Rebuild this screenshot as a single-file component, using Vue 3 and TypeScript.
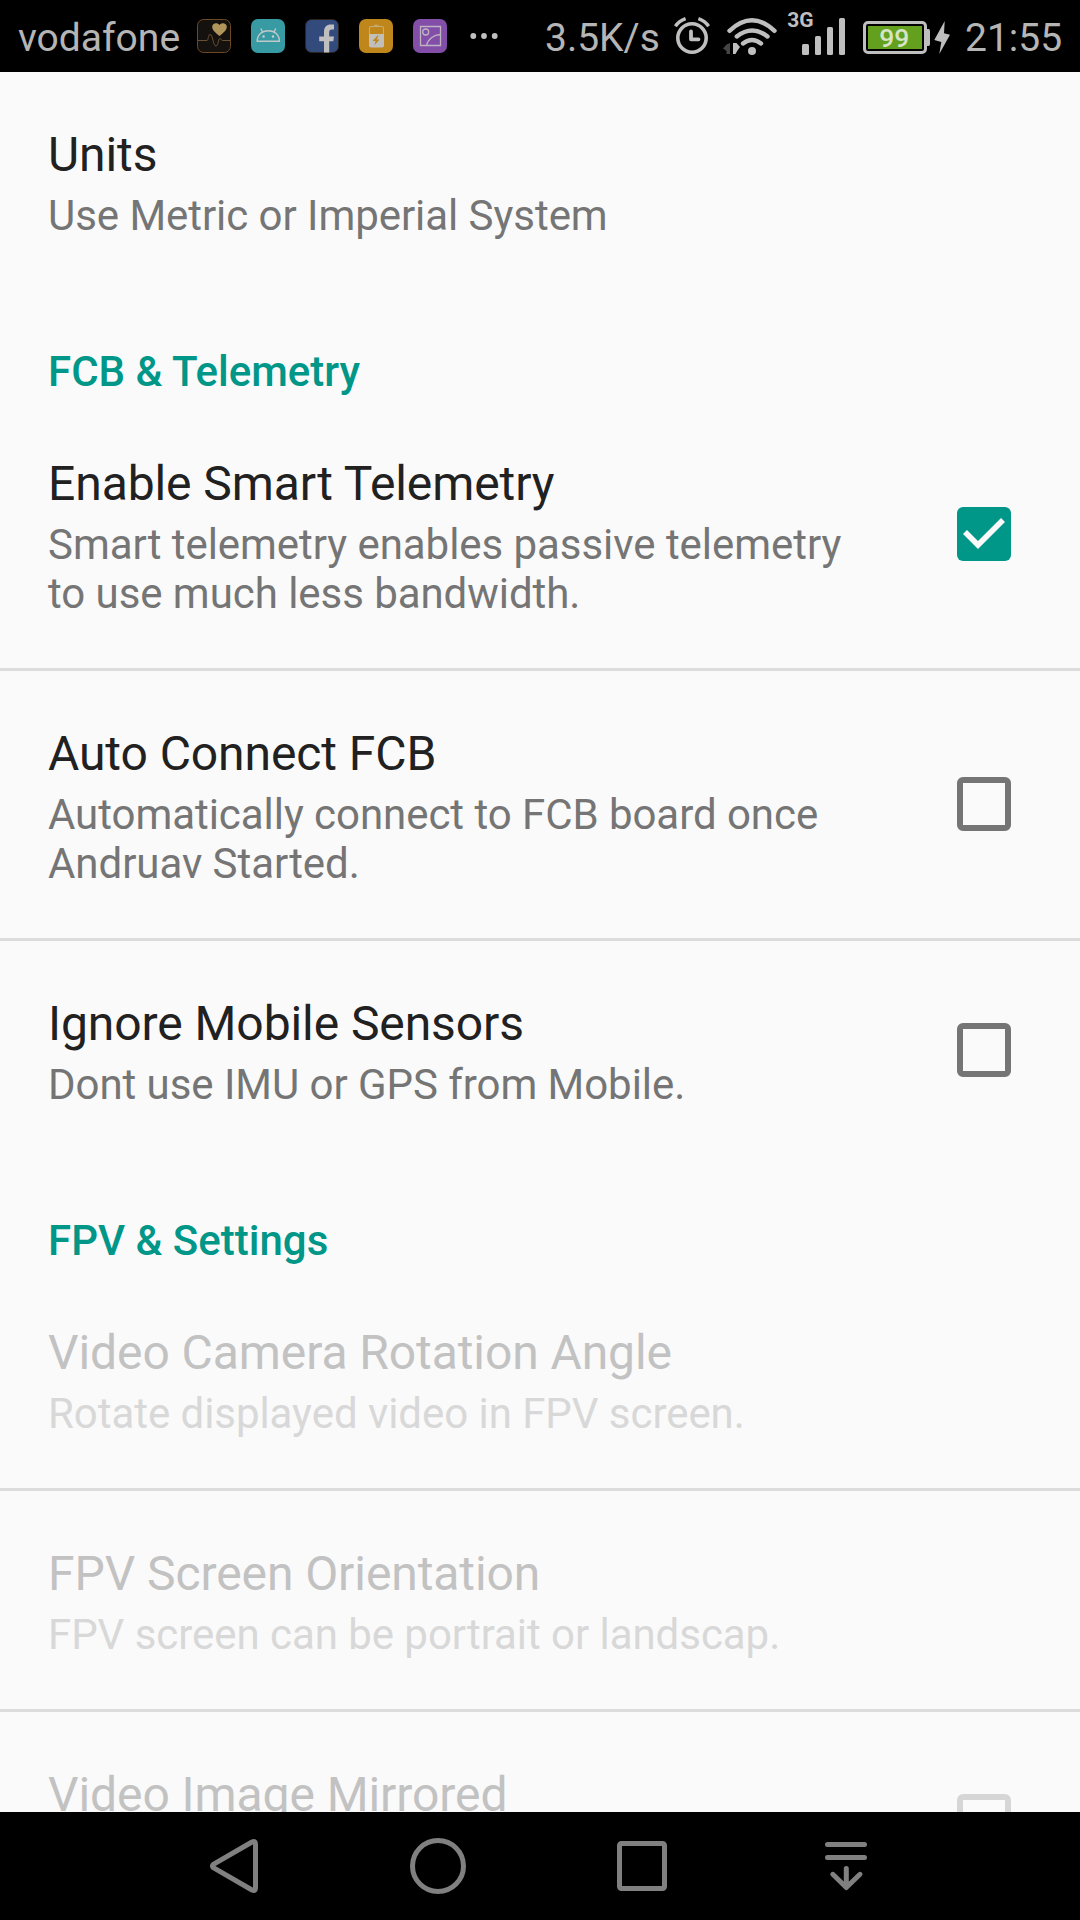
<script setup lang="ts">
interface Item {
  title: string
  summary: string[]
  checked?: boolean
  disabled?: boolean
}
interface Section {
  heading?: string
  items: Item[]
}

const sections: Section[] = [
  { items: [{ title: 'Units', summary: ['Use Metric or Imperial System'] }] },
  {
    heading: 'FCB & Telemetry',
    items: [
      {
        title: 'Enable Smart Telemetry',
        summary: ['Smart telemetry enables passive telemetry', 'to use much less bandwidth.'],
        checked: true,
      },
      {
        title: 'Auto Connect FCB',
        summary: ['Automatically connect to FCB board once', 'Andruav Started.'],
        checked: false,
      },
      { title: 'Ignore Mobile Sensors', summary: ['Dont use IMU or GPS from Mobile.'], checked: false },
    ],
  },
  {
    heading: 'FPV & Settings',
    items: [
      { title: 'Video Camera Rotation Angle', summary: ['Rotate displayed video in FPV screen.'], disabled: true },
      { title: 'FPV Screen Orientation', summary: ['FPV screen can be portrait or landscap.'], disabled: true },
      { title: 'Video Image Mirrored', summary: [''], checked: false, disabled: true },
    ],
  },
]
</script>

<template>
  <div class="screen">
    <header class="status">
      <span class="carrier">vodafone</span>
      <div class="apps">
        <svg width="34" height="34" viewBox="0 0 34 34">
          <rect x="0.5" y="0.5" width="33" height="33" rx="6" fill="#15110f" stroke="#6b4a24" />
          <path d="M0.5 21.5H10C11.500 21.500 11 15.500 13 15.500C16 15.500 16 27 19 27C21.500 27 21 19.500 23 19.500C24 19.500 24 21.500 25.500 21.500H33.500" fill="none" stroke="#6a5231" />
          <path d="M22.500 17C18 13.500 15.200 11 15.200 7.800C15.200 3.800 20.500 3.200 22.500 6C24.500 3.200 29.800 3.800 29.800 7.800C29.800 11 27 13.500 22.500 17Z" fill="#b0955a" />
        </svg>
        <svg width="34" height="34" viewBox="0 0 34 34">
          <rect width="34" height="34" rx="7" fill="#389aa3" />
          <path d="M6.200 22.300C6.200 15.500 11 11.700 17.300 11.700S28.400 15.500 28.400 22.300Z M11.800 13.300L9.800 9.500M22.800 13.300L24.800 9.500" fill="none" stroke="#c0c8c8" stroke-width="1.400" />
          <circle cx="12.600" cy="17.500" r="1.200" fill="#c8cece" />
          <circle cx="22" cy="17.500" r="1.200" fill="#c8cece" />
        </svg>
        <svg width="34" height="34" viewBox="0 0 34 34">
          <rect x="0.500" y="0.500" width="33" height="33" rx="6" fill="#334a7d" stroke="#2c241f" />
          <path d="M19 33.500V22.300H14.200V17.500H19V13C19 8 21.500 5.500 26 5.500H29V10.500H27C24.800 10.500 24.200 11.500 24.200 13.500V17.500H29L28.300 22.300H24.200V33.500Z" fill="#bfbfc0" />
        </svg>
        <svg width="34" height="34" viewBox="0 0 34 34">
          <rect width="34" height="34" rx="7" fill="#bf871b" />
          <path d="M15 6.200H19.500M10.500 15V9Q10.500 7.500 12 7.500H23Q24.500 7.500 24.500 9V15" fill="none" stroke="#c7ad78" stroke-width="1.100" />
          <path d="M10 15H25V26.500Q25 28.500 23 28.500H12Q10 28.500 10 26.500Z" fill="#c0bfbc" />
          <path d="M18.600 16.500L13.500 22H16.500L15.500 26.200L20.500 20.600H17.600L19.600 16.500Z" fill="#bf871b" />
        </svg>
        <svg width="34" height="34" viewBox="0 0 34 34">
          <rect width="34" height="34" rx="7" fill="#824ea8" />
          <path d="M7.500 7.500H27.500V26.500H7.500ZM13.500 26.500C15 20 20.500 15.800 27.500 15.500" fill="none" stroke="#bdb4c4" stroke-width="1.300" />
          <circle cx="12.700" cy="13" r="3" fill="none" stroke="#bdb4c4" stroke-width="1.300" />
        </svg>
      </div>
      <svg class="more" width="28" height="72" viewBox="470 0 28 72" fill="#c0c0c0">
        <circle cx="473.300" cy="36" r="2.900" /><circle cx="484" cy="36" r="2.900" /><circle cx="494.700" cy="36" r="2.900" />
      </svg>
      <span class="speed">3.5K/s</span>
      <svg width="48" height="72" viewBox="670 0 48 72" fill="none" stroke="#bfbfbf">
        <circle cx="692" cy="38" r="14.200" stroke-width="3.600" />
        <path d="M691 31.500V39.300H698.500" stroke-width="3.800" stroke-linecap="round" stroke-linejoin="round" />
        <path d="M675.400 26.300Q679 21 685.600 18.700M708.600 26.300Q705 21 698.400 18.700" stroke-width="3.400" />
      </svg>
      <svg width="66" height="72" viewBox="718 0 66 72" fill="none" stroke="#bfbfbf" stroke-width="4.400" stroke-linecap="round">
        <path d="M729.500 30.800Q752 9.800 774.500 30.800M736.800 36.500Q752 24.500 767.500 36.500M743 43.500Q752 36.500 761 43.500" />
        <circle cx="752" cy="51" r="4" fill="#bfbfbf" stroke="none" />
        <path d="M730 43V54H726.500V51L723 48.500L726.500 44.500Z" fill="#444" stroke="none" />
        <path d="M733 43H736.500L740 47L737.500 50.500L735.500 54H733Z" fill="#bfbfbf" stroke="none" />
      </svg>
      <svg width="72" height="72" viewBox="784 0 72 72" fill="#bfbfbf">
        <text x="787.300" y="27" font-size="21" font-weight="700">3G</text>
        <rect x="802" y="44" width="7" height="11" rx="1.500" />
        <rect x="815" y="36" width="6" height="19" rx="1.500" />
        <rect x="827" y="27" width="6" height="28" rx="1.500" />
        <rect x="839" y="18" width="6" height="37" rx="1.500" />
      </svg>
      <svg width="104" height="72" viewBox="856 0 104 72" fill="#bfbfbf">
        <rect x="864.500" y="22.500" width="61" height="30" rx="3.500" fill="none" stroke="#bfbfbf" stroke-width="3" />
        <path d="M927 29H928.500Q930 29 930 31V44Q930 46 928.500 46H927Z" />
        <rect x="868" y="26" width="54" height="23" fill="#62a01e" />
        <text x="894.200" y="46.500" font-size="26.500" font-weight="500" text-anchor="middle" fill="#d5e4c5">99</text>
        <path d="M944.700 21L934.300 40L941.300 42L939.300 54L950 34.700L944 33.200Z" />
      </svg>
      <span class="clock">21:55</span>
    </header>

    <main class="list">
      <section v-for="(section, s) in sections" :key="s">
        <h2 v-if="section.heading" class="heading">{{ section.heading }}</h2>
        <div v-for="item in section.items" :key="item.title" class="item" :class="{ disabled: item.disabled }">
          <div class="texts">
            <div class="title">{{ item.title }}</div>
            <div v-for="line in item.summary" :key="line" class="summary">{{ line }}</div>
          </div>
          <div v-if="item.checked !== undefined" class="box" :class="{ checked: item.checked }">
            <svg v-if="item.checked" width="54" height="54" viewBox="0 0 54 54">
              <path d="M8 25L21 38L46 13" fill="none" stroke="#fafafa" stroke-width="5.600" />
            </svg>
          </div>
        </div>
      </section>
    </main>

    <nav class="nav">
      <svg width="1080" height="108" viewBox="0 1812 1080 108" fill="none" stroke="#808080" stroke-width="5" stroke-linecap="round" stroke-linejoin="round">
        <path d="M213.300 1864.300L252 1842Q255.500 1840.500 255.500 1844V1888Q255.500 1891.500 252 1890L213.300 1867.700Q211.500 1866 213.300 1864.300Z" />
        <circle cx="438" cy="1866" r="25.500" />
        <rect x="619.500" y="1843.500" width="45" height="45" rx="2" />
        <path d="M827.500 1844.500H864.500M827.500 1857.500H864.500M846.300 1868.500V1887M832.800 1874.300L846.300 1887.500L860 1874.300" />
      </svg>
    </nav>
  </div>
</template>

<style>
body {
  margin: 0;
  background: #000;
}
</style>

<style scoped>
.screen {
  display: flex;
  flex-direction: column;
  width: 1080px;
  height: 1920px;
  overflow: hidden;
  background: #fafafa;
  font-family: Roboto, 'Liberation Sans', sans-serif;
}
.status {
  display: flex;
  align-items: center;
  flex: none;
  height: 72px;
  background: #000;
  color: #b5b5b5;
  font-size: 39px;
  line-height: 72px;
  white-space: nowrap;
}
.status svg {
  flex: none;
}
.carrier {
  width: 179px;
  padding-left: 18px;
}
.apps {
  display: flex;
  gap: 20px;
}
.more {
  margin-left: 23px;
}
.speed {
  width: 125px;
  margin-left: 47px;
}
.clock {
  margin-left: 5px;
}
.status span {
  flex: none;
  padding-top: 4px;
}
.list {
  flex: 1;
  min-height: 0;
  overflow: hidden;
}
.heading {
  height: 111px;
  margin: 0;
  padding: 57px 48px 0;
  box-sizing: border-box;
  color: #009688;
  font-size: 42px;
  font-weight: 500;
  line-height: 49px;
}
.item {
  display: flex;
  align-items: center;
  justify-content: space-between;
  padding: 0 69px 0 48px;
}
.item + .item {
  border-top: 3px solid #dcdcdc;
}
.texts {
  padding: 54px 0 50px;
  white-space: nowrap;
}
.title {
  height: 57px;
  margin-bottom: 8px;
  color: #212121;
  font-size: 48px;
  line-height: 57px;
  letter-spacing: -0.08px;
}
.summary {
  height: 49px;
  color: #757575;
  font-size: 42px;
  line-height: 49px;
  letter-spacing: -0.05px;
}
.box {
  box-sizing: border-box;
  width: 54px;
  height: 54px;
  margin-bottom: 0.6px;
  border: 6px solid #757575;
  border-radius: 6px;
}
.box.checked {
  border: 0;
  background: #009688;
}
.box svg {
  display: block;
}
.disabled .title {
  color: #c2c2c2;
}
.disabled .summary {
  color: #d8d8d8;
}
.disabled .box {
  border-color: #d6d6d6;
}
.nav {
  flex: none;
  height: 108px;
  background: #000;
}
.nav svg {
  display: block;
}
</style>
